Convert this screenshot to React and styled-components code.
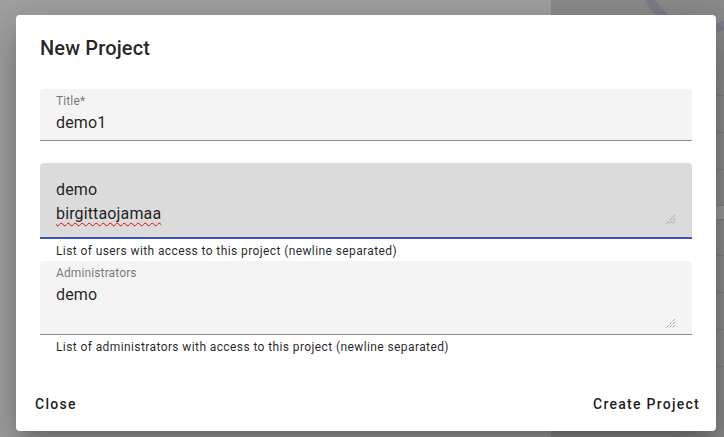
import React from "react";
import styled, { createGlobalStyle } from "styled-components";

const Global = createGlobalStyle`
  html, body { margin: 0; padding: 0; }
  body { font-family: Roboto, "Noto Sans", sans-serif; overflow: hidden; }
  * { box-sizing: border-box; }
`;

const Page = styled.div`
  position: relative;
  width: 724px;
  height: 437px;
  display: flex;
  background: #a1a1a1;
  overflow: hidden;
`;

const LeftArea = styled.div`
  flex: 0 0 551px;
  background: #a1a1a1;
`;

const RightPanel = styled.div`
  position: relative;
  flex: 1;
  background: #8b8b8b;
  display: flex;
  flex-direction: column;
  padding-top: 58px;
`;

const Arc = styled.svg`
  position: absolute;
  top: 0;
  left: 0;
`;

const RowLine = styled.div`
  height: ${(p) => p.h}px;
  border-bottom: 1px solid #7d7d7d;
  background: ${(p) => (p.light ? "#9a9a9a" : "transparent")};
`;

const Dialog = styled.div`
  position: absolute;
  left: 16px;
  top: 15px;
  width: 700px;
  height: 416px;
  background: #fff;
  border-radius: 4px;
  box-shadow: 0 11px 15px -7px rgba(0,0,0,0.2), 0 24px 38px 3px rgba(0,0,0,0.14), 0 9px 46px 8px rgba(0,0,0,0.12);
  display: flex;
  flex-direction: column;
`;

const Title = styled.h2`
  margin: 0;
  padding: 20px 24px 0;
  font-size: 20px;
  font-weight: 500;
  line-height: 26px;
  color: rgba(0,0,0,0.87);
  letter-spacing: 0.0075em;
`;

const Content = styled.div`
  padding: 28px 24px 0;
  display: flex;
  flex-direction: column;
  flex: 1;
`;

const Field = styled.div`
  display: flex;
  flex-direction: column;
  margin-bottom: ${(p) => p.mb || 0}px;
`;

const FilledBox = styled.div`
  position: relative;
  background: ${(p) => (p.focused ? "#dbdbdb" : "#f4f4f4")};
  border-top-left-radius: 4px;
  border-top-right-radius: 4px;
  border-bottom: ${(p) => (p.focused ? "2px solid #3f51b5" : "1px solid #8c8c8c")};
  padding: ${(p) => p.pad};
`;

const Label = styled.span`
  position: absolute;
  left: 16px;
  top: 5px;
  font-size: 12px;
  line-height: 14px;
  color: rgba(0,0,0,0.54);
  letter-spacing: 0.01em;
`;

const Value = styled.div`
  font-size: 16px;
  line-height: ${(p) => p.lh || 24}px;
  height: ${(p) => p.h}px;
  color: rgba(0,0,0,0.87);
  letter-spacing: 0.009em;
`;

const Line = styled.div`
  white-space: pre;
`;

const Misspelled = styled.span`
  text-decoration: underline wavy #e00;
  text-decoration-thickness: 1px;
  text-underline-offset: 3px;
`;

const Grip = styled.svg`
  position: absolute;
  right: 16px;
  bottom: ${(p) => p.b}px;
`;

const Helper = styled.div`
  margin: 3px 16px 0;
  font-size: 12px;
  line-height: 19px;
  color: rgba(0,0,0,0.87);
  letter-spacing: 0.4px;
`;

const Actions = styled.div`
  display: flex;
  justify-content: space-between;
  align-items: center;
  padding: 0 8px 9px;
`;

const Button = styled.button`
  border: 0;
  background: transparent;
  font-family: Roboto, sans-serif;
  font-size: 14px;
  font-weight: 500;
  letter-spacing: 0.09em;
  color: rgba(0,0,0,0.9);
  padding: 6px ${(p) => p.px}px;
  line-height: 24px;
  cursor: pointer;
`;

const GripIcon = ({ b }) => (
  <Grip b={b} width="11" height="11" viewBox="0 0 11 11">
    <path d="M10 1 L1 10 M10 4 L4 10 M10 7 L7 10" stroke="#888" strokeWidth="1" strokeDasharray="1 1" fill="none" />
  </Grip>
);

export default function App() {
  return (
    <Page>
      <Global />
      <LeftArea />
      <RightPanel>
        <Arc width="173" height="60" viewBox="0 0 173 60">
          <circle cx="150" cy="-28" r="58" stroke="#7b7d8b" strokeWidth="9" fill="none" />
        </Arc>
        <RowLine h={38} />
        <RowLine h={37} />
        <RowLine h={37} />
        <RowLine h={36} />
        <RowLine h={14} light />
        <RowLine h={36} />
        <RowLine h={37} />
        <RowLine h={37} />
        <RowLine h={37} />
      </RightPanel>

      <Dialog>
        <Title>New Project</Title>
        <Content>
          <Field mb={22}>
            <FilledBox pad="22px 16px 6px">
              <Label>Title*</Label>
              <Value lh={23} h={23}>demo1</Value>
            </FilledBox>
          </Field>

          <Field>
            <FilledBox focused pad="15px 16px 11px">
              <Value h={48}>
                <Line>demo</Line>
                <Line>
                  <Misspelled>birgittaojamaa</Misspelled>
                </Line>
              </Value>
              <GripIcon b={12} />
            </FilledBox>
            <Helper>List of users with access to this project (newline separated)</Helper>
          </Field>

          <Field>
            <FilledBox pad="22px 16px 3px">
              <Label>Administrators</Label>
              <Value h={48}>
                <Line>demo</Line>
              </Value>
              <GripIcon b={5} />
            </FilledBox>
            <Helper>List of administrators with access to this project (newline separated)</Helper>
          </Field>
        </Content>
        <Actions>
          <Button px={11}>Close</Button>
          <Button px={8}>Create Project</Button>
        </Actions>
      </Dialog>
    </Page>
  );
}
